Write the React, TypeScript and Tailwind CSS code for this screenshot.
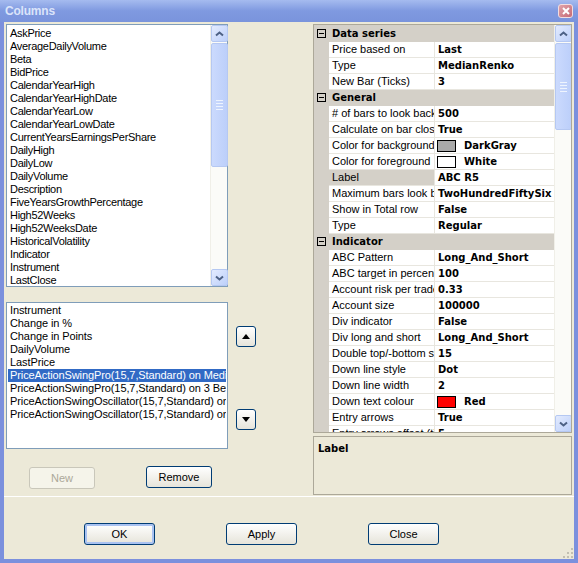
import React from 'react';

type Prop =
  | { kind: 'cat'; label: string }
  | { kind: 'prop'; label: string; value: string; swatch?: string; selected?: boolean };

const available = [
  'AskPrice',
  'AverageDailyVolume',
  'Beta',
  'BidPrice',
  'CalendarYearHigh',
  'CalendarYearHighDate',
  'CalendarYearLow',
  'CalendarYearLowDate',
  'CurrentYearsEarningsPerShare',
  'DailyHigh',
  'DailyLow',
  'DailyVolume',
  'Description',
  'FiveYearsGrowthPercentage',
  'High52Weeks',
  'High52WeeksDate',
  'HistoricalVolatility',
  'Indicator',
  'Instrument',
  'LastClose',
];

const chosen = [
  'Instrument',
  'Change in %',
  'Change in Points',
  'DailyVolume',
  'LastPrice',
  'PriceActionSwingPro(15,7,Standard) on MedianRenko',
  'PriceActionSwingPro(15,7,Standard) on 3 Better Renko',
  'PriceActionSwingOscillator(15,7,Standard) on MedianRenko',
  'PriceActionSwingOscillator(15,7,Standard) on 3 Better Renko',
];

const props: Prop[] = [
  { kind: 'cat', label: 'Data series' },
  { kind: 'prop', label: 'Price based on', value: 'Last' },
  { kind: 'prop', label: 'Type', value: 'MedianRenko' },
  { kind: 'prop', label: 'New Bar (Ticks)', value: '3' },
  { kind: 'cat', label: 'General' },
  { kind: 'prop', label: '# of bars to look back', value: '500' },
  { kind: 'prop', label: 'Calculate on bar close', value: 'True' },
  { kind: 'prop', label: 'Color for background', value: 'DarkGray', swatch: '#a9a9a9' },
  { kind: 'prop', label: 'Color for foreground', value: 'White', swatch: '#ffffff' },
  { kind: 'prop', label: 'Label', value: 'ABC R5', selected: true },
  { kind: 'prop', label: 'Maximum bars look back', value: 'TwoHundredFiftySix' },
  { kind: 'prop', label: 'Show in Total row', value: 'False' },
  { kind: 'prop', label: 'Type', value: 'Regular' },
  { kind: 'cat', label: 'Indicator' },
  { kind: 'prop', label: 'ABC Pattern', value: 'Long_And_Short' },
  { kind: 'prop', label: 'ABC target in percent', value: '100' },
  { kind: 'prop', label: 'Account risk per trade', value: '0.33' },
  { kind: 'prop', label: 'Account size', value: '100000' },
  { kind: 'prop', label: 'Div indicator', value: 'False' },
  { kind: 'prop', label: 'Div long and short', value: 'Long_And_Short' },
  { kind: 'prop', label: 'Double top/-bottom strength', value: '15' },
  { kind: 'prop', label: 'Down line style', value: 'Dot' },
  { kind: 'prop', label: 'Down line width', value: '2' },
  { kind: 'prop', label: 'Down text colour', value: 'Red', swatch: '#ff0000' },
  { kind: 'prop', label: 'Entry arrows', value: 'True' },
  { kind: 'prop', label: 'Entry arrows offset (ticks)', value: '5' },
];

const Chevron = ({ down }: { down?: boolean }) => (
  <svg width="9" height="6" viewBox="0 0 9 6">
    <path
      d={down ? 'M1 1.5 L4.5 4.5 L8 1.5' : 'M1 4.5 L4.5 1.5 L8 4.5'}
      fill="none"
      stroke="#4d6185"
      strokeWidth="2"
    />
  </svg>
);

const ScrollBtn = ({ down }: { down?: boolean }) => (
  <div className="h-[17px] w-[17px] shrink-0 flex items-center justify-center rounded-[2px] border border-[#b5c8f2] bg-gradient-to-br from-[#e3ebfe] to-[#bdd0fa]">
    <Chevron down={down} />
  </div>
);

// XP style scroll bar
const ScrollBar = ({ thumb }: { thumb: number }) => (
  <div className="w-[17px] shrink-0 flex flex-col bg-[#fbfbf8] border-l border-[#f0efe8]">
    <ScrollBtn />
    <div
      className="mt-[1px] w-[17px] shrink-0 flex flex-col items-center justify-center gap-[2px] rounded-[2px] border border-[#b5c8f2] bg-gradient-to-r from-[#cbdafd] to-[#bccffa]"
      style={{ height: thumb }}
    >
      <div className="w-[7px] h-[1px] bg-[#eef4fe]" />
      <div className="w-[7px] h-[1px] bg-[#eef4fe]" />
      <div className="w-[7px] h-[1px] bg-[#eef4fe]" />
      <div className="w-[7px] h-[1px] bg-[#eef4fe]" />
    </div>
    <div className="flex-1" />
    <ScrollBtn down />
  </div>
);

const XpButton = ({
  label,
  w,
  disabled,
  focus,
}: {
  label: string;
  w: string;
  disabled?: boolean;
  focus?: boolean;
}) => (
  <div
    className={`${w} h-[22px] rounded-[3px] border flex items-center justify-center text-[11px] tracking-normal ${
      disabled
        ? 'border-[#c9c7ba] bg-[#f5f4ea] text-[#aca899]'
        : 'border-[#003c74] bg-gradient-to-b from-white to-[#e6e4da] text-black'
    } ${focus ? 'shadow-[inset_0_0_0_2px_#a9c2f1]' : ''}`}
  >
    {label}
  </div>
);

const MoveBtn = ({ down }: { down?: boolean }) => (
  <div className="w-[20px] h-[21px] rounded-[3px] border border-[#003c74] bg-gradient-to-b from-white to-[#e6e4da] flex items-center justify-center">
    <svg width="8" height="5" viewBox="0 0 8 5">
      <path d={down ? 'M0 0 L8 0 L4 5 Z' : 'M0 5 L8 5 L4 0 Z'} fill="#000" />
    </svg>
  </div>
);

const App: React.FC = () => {
  return (
    <div className="w-[578px] h-[563px] flex flex-col bg-[#7b90dd] font-['Liberation_Sans',Arial,sans-serif] text-[11px] text-black">
      {/* title bar */}
      <div className="h-[22px] shrink-0 flex items-center justify-between pl-[5px] pr-[5px] bg-gradient-to-b from-[#a5bbef] via-[#7f99e0] to-[#7a94dc]">
        <span className="text-[12px] font-bold text-[#dbe4fa] tracking-[-0.2px]">Columns</span>
        <div className="w-[15px] h-[14px] rounded-[3px] border border-[#f2dde0] bg-gradient-to-br from-[#e0a3aa] to-[#c56a76] flex items-center justify-center">
          <svg width="8" height="8" viewBox="0 0 8 8">
            <path d="M1 1 L7 7 M7 1 L1 7" stroke="#fff" strokeWidth="2" />
          </svg>
        </div>
      </div>

      {/* body */}
      <div className="relative flex-1 mx-[4px] mb-[4px] bg-[#ece9d8] flex flex-col">
        <div className="flex pt-[2px] pl-[2px]">
          {/* left column */}
          <div className="w-[222px] flex flex-col">
            <div className="h-[263px] border border-[#7f9db9] bg-white flex">
              <div className="flex-1 pt-[2px] pl-[3px] overflow-hidden tracking-[-0.3px]">
                {available.map((a) => (
                  <div key={a} className="h-[13px] leading-[13px] whitespace-nowrap">
                    {a}
                  </div>
                ))}
              </div>
              <ScrollBar thumb={124} />
            </div>

            <div className="mt-[15px] h-[147px] border border-[#7f9db9] bg-white pt-[1px] overflow-hidden tracking-[-0.1px]">
              {chosen.map((c, i) => (
                <div
                  key={c}
                  className={`mx-[1px] h-[13px] leading-[13px] pl-[2px] whitespace-nowrap overflow-hidden ${
                    i === 5 ? 'bg-[#316ac5] text-white' : ''
                  }`}
                >
                  {c}
                </div>
              ))}
            </div>

            <div className="mt-[17px] flex items-start">
              <div className="ml-[23px] mt-[1px]">
                <XpButton label="New" w="w-[66px]" disabled />
              </div>
              <div className="ml-[51px]">
                <XpButton label="Remove" w="w-[66px]" />
              </div>
            </div>
          </div>

          {/* middle column */}
          <div className="w-[85px] flex flex-col pl-[8px]">
            <div className="mt-[302px]">
              <MoveBtn />
            </div>
            <div className="mt-[62px]">
              <MoveBtn down />
            </div>
          </div>

          {/* right column */}
          <div className="w-[259px] flex flex-col">
            <div className="h-[409px] border border-[#aca899] bg-white flex overflow-hidden">
              <div className="flex-1 pt-[1px] overflow-hidden bg-[#d4d0c8]">
                {props.map((p, i) =>
                  p.kind === 'cat' ? (
                    <div key={i} className="h-[16px] flex items-center border-b border-[#d4d0c8]">
                      <div className="w-[15px] flex justify-center">
                        <div className="w-[9px] h-[9px] border border-black flex items-center justify-center">
                          <div className="w-[5px] h-[1px] bg-black" />
                        </div>
                      </div>
                      <span className="pl-[3px] font-['DejaVu_Sans',sans-serif] font-bold text-[10px]">
                        {p.label}
                      </span>
                    </div>
                  ) : (
                    <div key={i} className="h-[16px] flex">
                      <div className="w-[15px] shrink-0" />
                      <div
                        className={`w-[106px] shrink-0 pl-[3px] leading-[15px] whitespace-nowrap overflow-hidden border-r border-b border-[#e8e6df] ${
                          p.selected ? 'bg-[#d4d0c8]' : 'bg-white'
                        }`}
                      >
                        {p.label}
                      </div>
                      <div className="flex-1 flex items-center pl-[2px] bg-white border-b border-[#e8e6df] whitespace-nowrap overflow-hidden font-['DejaVu_Sans',sans-serif] font-bold text-[10px]">
                        {p.swatch ? (
                          <>
                            <div
                              className="w-[19px] h-[12px] border border-black shrink-0"
                              style={{ backgroundColor: p.swatch }}
                            />
                            <span className="ml-[8px]">{p.value}</span>
                          </>
                        ) : (
                          <span className="pl-[1px]">{p.value}</span>
                        )}
                      </div>
                    </div>
                  )
                )}
              </div>
              <ScrollBar thumb={87} />
            </div>

            <div className="mt-[3px] h-[59px] border border-[#aca899] bg-[#ece9d8] pl-[4px] pt-[3px]">
              <span className="font-['DejaVu_Sans',sans-serif] font-bold text-[10px]">Label</span>
            </div>
          </div>
        </div>

        <div className="mt-[1px] h-[1px] bg-white" />

        {/* dialog buttons */}
        <div className="mt-[26px] flex pl-[80px] gap-[71px]">
          <XpButton label="OK" w="w-[71px]" focus />
          <XpButton label="Apply" w="w-[71px]" />
          <XpButton label="Close" w="w-[71px]" />
        </div>

        {/* resize grip */}
        <div className="absolute right-[1px] bottom-[1px] w-[10px] h-[10px]">
          <svg width="10" height="10" viewBox="0 0 10 10">
            <g fill="#c2bfb1">
              <rect x="8" y="0" width="2" height="2" />
              <rect x="4" y="4" width="2" height="2" />
              <rect x="8" y="4" width="2" height="2" />
              <rect x="0" y="8" width="2" height="2" />
              <rect x="4" y="8" width="2" height="2" />
              <rect x="8" y="8" width="2" height="2" />
            </g>
          </svg>
        </div>
      </div>
    </div>
  );
};

export default App;
